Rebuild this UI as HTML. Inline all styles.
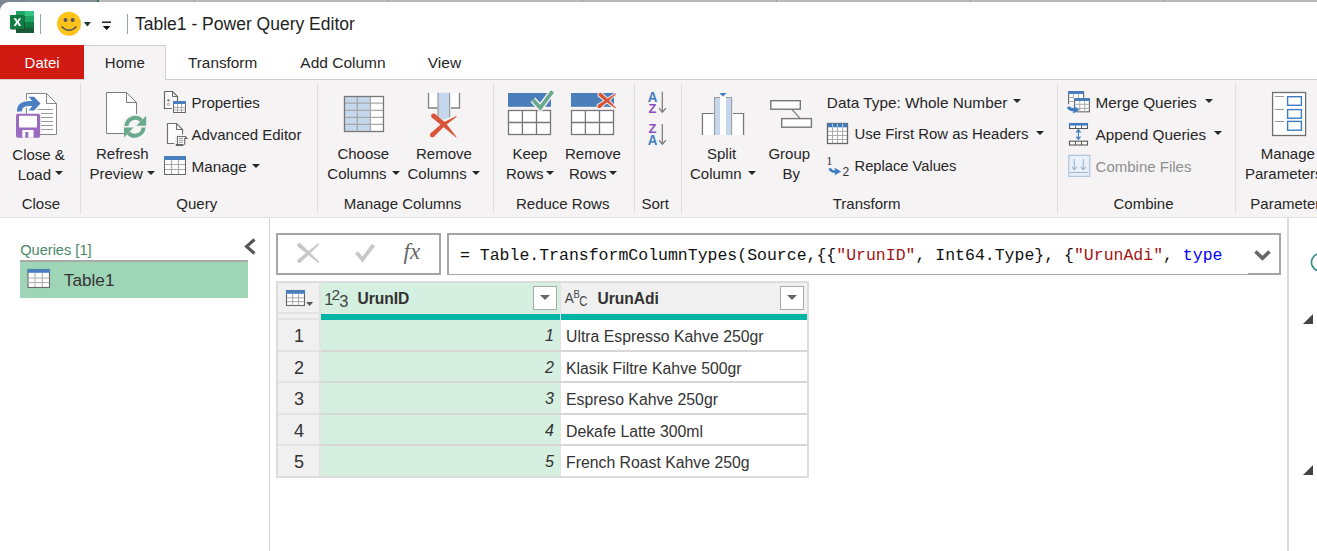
<!DOCTYPE html>
<html><head><meta charset="utf-8">
<style>
html,body{margin:0;padding:0;}
body{width:1317px;height:551px;overflow:hidden;position:relative;background:#fff;font-family:"Liberation Sans",sans-serif;color:#262626;}
.a{position:absolute;}
.t{position:absolute;white-space:nowrap;line-height:1;font-size:15px;}
.sep{position:absolute;width:1px;background:#e1dfdd;top:83px;height:131px;}
.dd{position:absolute;width:0;height:0;border-left:4px solid transparent;border-right:4px solid transparent;border-top:4px solid #262626;}
svg{position:absolute;overflow:visible;}
</style></head><body>

<!-- top strip background -->
<div class="a" style="left:0;top:0;width:1317px;height:12px;background:#bababa;"></div>
<div class="a" style="left:0;top:0;width:97px;height:12px;background:#878d97;"></div>
<div class="a" style="left:97px;top:0;width:2px;height:12px;background:#2f7d4f;"></div>
<div class="a" style="left:194px;top:0;width:1px;height:12px;background:#9a9a9a;"></div>
<div class="a" style="left:388px;top:0;width:1px;height:12px;background:#9a9a9a;"></div>
<div class="a" style="left:582px;top:0;width:1px;height:12px;background:#9a9a9a;"></div>
<div class="a" style="left:776px;top:0;width:1px;height:12px;background:#9a9a9a;"></div>
<div class="a" style="left:970px;top:0;width:1px;height:12px;background:#9a9a9a;"></div>
<div class="a" style="left:1164px;top:0;width:1px;height:12px;background:#9a9a9a;"></div>
<div class="a" style="left:0;top:0;width:27px;height:12px;background:#7f8794;"></div>
<!-- window -->
<div class="a" style="left:0;top:2px;width:1317px;height:549px;background:#fff;border-top-left-radius:9px;"></div>

<!-- title bar -->
<svg style="left:0;top:0" width="130" height="44">
  <rect x="16" y="11" width="18" height="22" fill="#185c37"/>
  <rect x="16" y="11" width="18" height="5.5" fill="#21a366"/>
  <rect x="25" y="11" width="9" height="5.5" fill="#33c481"/>
  <rect x="16" y="16.5" width="18" height="5.5" fill="#21a366"/>
  <rect x="16" y="22" width="18" height="5.5" fill="#107c41"/>
  <rect x="11" y="16" width="14" height="14" fill="#0b3d22" opacity="0.5"/>
  <rect x="10" y="15" width="14" height="14" fill="#107c41"/>
  <path d="M13.6 18.2h2.4l1.4 2.6 1.5-2.6h2.3l-2.5 3.8 2.6 4h-2.4l-1.5-2.7-1.5 2.7h-2.4l2.6-4z" fill="#fff"/>
  <rect x="40" y="14" width="1" height="20" fill="#8fa89a"/>
  <circle cx="69" cy="23.8" r="12" fill="#fdc31a"/>
  <circle cx="65.5" cy="20" r="2" fill="#555"/>
  <circle cx="72.6" cy="20" r="2" fill="#555"/>
  <path d="M61.5 26.5 Q69 34 76.5 26.5" stroke="#555" stroke-width="1.4" fill="none"/>
  <path d="M83.8 22h7.2l-3.6 4.4z" fill="#1f3d33"/>
  <rect x="102" y="21.5" width="9" height="1.4" fill="#111"/>
  <path d="M102.8 26h7.6l-3.8 4z" fill="#111"/>
  <rect x="127" y="14" width="1" height="20" fill="#8fa89a"/>
</svg>
<div class="t" style="left:135px;top:16px;font-size:17.5px;color:#1f1f1f;">Table1 - Power Query Editor</div>

<!-- tabs -->
<div class="a" style="left:0;top:79px;width:1317px;height:1px;background:#d2d0ce;"></div>
<div class="a" style="left:0;top:45px;width:84px;height:34px;background:#d11a12;"></div>
<div class="a" style="left:84px;top:45px;width:82px;height:35px;background:#f5f3f4;border-top:1px solid #d2d0ce;border-right:1px solid #d2d0ce;box-sizing:border-box;"></div>
<div class="t" style="left:24.6px;top:55px;color:#fff;">Datei</div>
<div class="t" style="left:104.8px;top:55px;">Home</div>
<div class="t" style="left:188px;top:55px;font-size:15.3px;">Transform</div>
<div class="t" style="left:300.3px;top:55px;font-size:15.5px;">Add Column</div>
<div class="t" style="left:427.8px;top:55px;font-size:15.5px;">View</div>

<!-- ribbon -->
<div class="a" style="left:0;top:80px;width:1317px;height:137px;background:#f5f3f4;"></div>
<div class="a" style="left:0;top:217px;width:1317px;height:1px;background:#e1dfdd;"></div>
<div class="sep" style="left:80px"></div>
<div class="sep" style="left:317px"></div>
<div class="sep" style="left:493px"></div>
<div class="sep" style="left:634px"></div>
<div class="sep" style="left:681px"></div>
<div class="sep" style="left:1057px"></div>
<div class="sep" style="left:1235px"></div>

<!-- group labels -->
<div class="t" style="left:21.7px;top:196px;">Close</div>
<div class="t" style="left:176.3px;top:196px;">Query</div>
<div class="t" style="left:343.8px;top:196px;">Manage Columns</div>
<div class="t" style="left:516px;top:196px;">Reduce Rows</div>
<div class="t" style="left:641.4px;top:196px;">Sort</div>
<div class="t" style="left:832.7px;top:196px;">Transform</div>
<div class="t" style="left:1113.5px;top:196px;">Combine</div>
<div class="t" style="left:1250.3px;top:196px;">Parameters</div>

<!-- big button labels -->
<div class="t" style="left:12.3px;top:147px;">Close &amp;</div>
<div class="t" style="left:17.7px;top:167px;">Load</div><div class="dd" style="left:55px;top:171px"></div>
<div class="t" style="left:96px;top:146px;">Refresh</div>
<div class="t" style="left:89.4px;top:166px;">Preview</div><div class="dd" style="left:147px;top:171px"></div>
<div class="t" style="left:191.4px;top:95px;">Properties</div>
<div class="t" style="left:191.4px;top:127px;">Advanced Editor</div>
<div class="t" style="left:191.4px;top:159px;font-size:15.3px;">Manage</div><div class="dd" style="left:252px;top:164px"></div>
<div class="t" style="left:337.4px;top:146px;">Choose</div>
<div class="t" style="left:327.3px;top:166px;">Columns</div><div class="dd" style="left:392px;top:171px"></div>
<div class="t" style="left:416px;top:146px;">Remove</div>
<div class="t" style="left:407.5px;top:166px;">Columns</div><div class="dd" style="left:472px;top:171px"></div>
<div class="t" style="left:512.4px;top:146px;">Keep</div>
<div class="t" style="left:506px;top:166px;">Rows</div><div class="dd" style="left:546px;top:171px"></div>
<div class="t" style="left:565px;top:146px;">Remove</div>
<div class="t" style="left:569px;top:166px;">Rows</div><div class="dd" style="left:609px;top:171px"></div>
<div class="t" style="left:707px;top:146px;">Split</div>
<div class="t" style="left:690px;top:166px;">Column</div><div class="dd" style="left:748px;top:171px"></div>
<div class="t" style="left:768.4px;top:146px;">Group</div>
<div class="t" style="left:782.6px;top:166px;">By</div>
<div class="t" style="left:826.8px;top:95px;font-size:15.35px;">Data Type: Whole Number</div><div class="dd" style="left:1012.6px;top:99px"></div>
<div class="t" style="left:854.6px;top:127px;font-size:14.9px;">Use First Row as Headers</div><div class="dd" style="left:1035.5px;top:131px"></div>
<div class="t" style="left:854.6px;top:159px;font-size:14.7px;">Replace Values</div>
<div class="t" style="left:1095.6px;top:95px;font-size:15.3px;">Merge Queries</div><div class="dd" style="left:1204.8px;top:99px"></div>
<div class="t" style="left:1095.6px;top:127px;font-size:15.3px;">Append Queries</div><div class="dd" style="left:1213.5px;top:131px"></div>
<div class="t" style="left:1095.6px;top:159px;color:#8e8e8e;">Combine Files</div>
<div class="t" style="left:1260.7px;top:146px;">Manage</div>
<div class="t" style="left:1245px;top:166px;">Parameters</div>

<!-- ICONS -->
<svg style="left:0;top:0" width="1317" height="220">
 <!-- Close & Load -->
 <path d="M26.5 93.5H46.5L56.5 103.5V134.5H26.5Z" fill="#fff" stroke="#868686"/>
 <path d="M46.5 93.5V103.5H56.5" fill="none" stroke="#868686"/>
 <path d="M37.5 109.5H53M41 113.5H53M41 117.5H53M41 121.5H53M41 125.5H53M41 129.5H53" stroke="#9a9a9a" stroke-width="1"/>
 <path d="M19.5 111.5 Q19 103.5 30 103.5 H35" stroke="#f5f3f4" stroke-width="8" fill="none"/>
 <path d="M19.5 111.5 Q19 103.5 30 103.5 H35" stroke="#4a7fc1" stroke-width="5" fill="none"/>
 <path d="M28.5 96.8H34L40.5 103.5L34 110.5H28.5L34.5 103.5Z" fill="#4a7fc1"/>
 <rect x="16" y="113.7" width="24.2" height="24" rx="2" fill="#9b6bbf"/>
 <rect x="19" y="115.8" width="18" height="11.8" rx="1" fill="#fff"/>
 <rect x="22.3" y="130" width="11.3" height="7.7" fill="#fff"/>
 <rect x="25.3" y="132" width="3" height="5.7" fill="#9b6bbf"/>
 <!-- Refresh -->
 <path d="M106.5 92.5H126.5L136.5 102.5V133.5H106.5Z" fill="#fff" stroke="#7c7c7c"/>
 <path d="M126.5 92.5V102.5H136.5" fill="none" stroke="#7c7c7c"/>
 <circle cx="135" cy="126.7" r="13" fill="#f5f3f4"/>
 <path d="M126.5 126 A8.7 8.7 0 0 1 141.5 120.5" stroke="#6aa98e" stroke-width="4" fill="none"/>
 <path d="M136.3 125.7H146.2V115.8Z" fill="#6aa98e"/>
 <path d="M143.5 127.5 A8.7 8.7 0 0 1 128.5 133" stroke="#6aa98e" stroke-width="4" fill="none"/>
 <path d="M124 127.6H133.5L124 137.5Z" fill="#6aa98e"/>
 <!-- Properties -->
 <path d="M164.5 91.5H172.5L177.5 96.5V101M172 108.5H164.5V91.5" fill="#fff" stroke="#666" stroke-width="1.2"/>
 <path d="M172.5 91.5V96.5H177.5" fill="none" stroke="#666" stroke-width="1"/>
 <circle cx="168.4" cy="100.3" r="1.2" fill="#888"/>
 <circle cx="168.4" cy="104.4" r="1.1" fill="none" stroke="#888" stroke-width="0.8"/>
 <rect x="173.5" y="101.5" width="12" height="11" fill="#fff" stroke="#666"/>
 <rect x="173" y="101" width="13" height="3" fill="#4a7fbd"/>
 <path d="M177.5 104V112M181.5 104V112M173.5 107.5H185.5M173.5 110H185.5" stroke="#aaa" stroke-width="1"/>
 <!-- Advanced Editor -->
 <path d="M167.5 123.5H176.5L182.5 129.5V143.5H167.5Z" fill="#fff" stroke="#707070" stroke-width="1.2"/>
 <path d="M176.5 123.5V129.5H182.5" fill="none" stroke="#707070" stroke-width="1.1"/>
 <path d="M175 134.5H188.5V146.5H174Z" fill="#f5f3f4"/>
 <path d="M177.5 144.5V136.5H185.5L187 138.3H184.7V144.8" fill="#fff" stroke="#707070" stroke-width="1.2"/>
 <path d="M179 138.3H183.2M179 140.3H183.2M179 142.3H183.2" stroke="#8a8a8a" stroke-width="0.9"/>
 <path d="M175.8 145H183.5" stroke="#555" stroke-width="1.8"/>
 <!-- Manage -->
 <rect x="164.5" y="156.5" width="21" height="18" fill="#fff" stroke="#666"/>
 <rect x="164" y="156" width="22" height="4" fill="#4a7fbd"/>
 <path d="M171.5 160V174M178.5 160V174M165 164.5H185M165 169.5H185" stroke="#aaa" stroke-width="1.2"/>
 <!-- Choose Columns -->
 <rect x="344" y="96" width="40" height="36" fill="#fff"/>
 <rect x="344" y="96" width="26.4" height="36" fill="#c5d7ec"/>
 <path d="M357.3 96V132M370.4 96V132M344 103.1H384M344 110.4H384M344 117.4H384M344 124.3H384" stroke="#a8a8a8" stroke-width="1.3"/>
 <rect x="344.5" y="96.5" width="39" height="35" fill="none" stroke="#777" stroke-width="1.3"/>
 <!-- Remove Columns -->
 <rect x="428.5" y="92.7" width="31" height="15.6" fill="#fff"/>
 <path d="M428.5 92.7V108H437.3M451 108H459.5V92.7" fill="none" stroke="#808080" stroke-width="1.3"/>
 <path d="M438 92.7V117.2L443.8 119.8L449.6 117.2V92.7Z" fill="#c5d7ec"/>
 <path d="M438 92.7V117.2M449.6 92.7V117.2" stroke="#9a9a9a" stroke-width="1.2"/>
 <path d="M431.97 117.65 L442.23 125.98 L456.01 137.48 L456.59 136.92 L445.37 122.62 L435.03 113.95Z" fill="#d9553a" stroke="#f5f3f4" stroke-width="0"/>
 <circle cx="433.5" cy="115.8" r="2.4" fill="#d9553a"/>
 <path d="M433.93 136.76 L444.96 125.81 L456.71 116.74 L456.29 116.06 L442.64 122.79 L430.67 133.24Z" fill="#d9553a"/>
 <circle cx="432.3" cy="135" r="2.4" fill="#d9553a"/>
 <!-- Keep Rows -->
 <rect x="508" y="93" width="43" height="13.8" fill="#4a7ebb"/>
 <rect x="508.5" y="110.5" width="42" height="24" fill="#fff" stroke="#777" stroke-width="1.3"/>
 <path d="M522.4 110.5V134.5M536.5 110.5V134.5M508.5 122.5H550.5" stroke="#777" stroke-width="1.3"/>
 <path d="M532.9 99.7L540.3 107.8L552.5 91.4" stroke="#f5f3f4" stroke-width="6.5" fill="none" stroke-linejoin="miter"/>
 <path d="M532.9 99.7L540.3 107.8L552.5 91.4" stroke="#6aa98e" stroke-width="3.8" fill="none" stroke-linejoin="miter"/>
 <!-- Remove Rows -->
 <rect x="571" y="93" width="43" height="13.8" fill="#4a7ebb"/>
 <rect x="571.5" y="110.5" width="42" height="24" fill="#fff" stroke="#777" stroke-width="1.3"/>
 <path d="M585.4 110.5V134.5M599.5 110.5V134.5M571.5 122.5H613.5" stroke="#777" stroke-width="1.3"/>
 <g stroke="#f5f3f4" stroke-width="1.8" fill="#f5f3f4">
 <path d="M599.04 96.03 L605.88 101.78 L615.57 108.46 L616.03 107.94 L608.12 99.22 L601.56 93.17Z"/><circle cx="600.3" cy="94.6" r="1.9"/>
 <path d="M600.44 107.82 L607.85 101.61 L616.21 93.88 L615.79 93.32 L606.15 99.39 L598.16 104.78Z"/><circle cx="599.3" cy="106.3" r="1.9"/>
 </g>
 <g fill="#d9553a">
 <path d="M599.04 96.03 L605.88 101.78 L615.57 108.46 L616.03 107.94 L608.12 99.22 L601.56 93.17Z"/><circle cx="600.3" cy="94.6" r="1.9"/>
 <path d="M600.44 107.82 L607.85 101.61 L616.21 93.88 L615.79 93.32 L606.15 99.39 L598.16 104.78Z"/><circle cx="599.3" cy="106.3" r="1.9"/>
 </g>
 <!-- Sort -->
 <g font-family="Liberation Sans" font-weight="bold" font-size="13.5">
  <text x="647.8" y="101.6" fill="#3f7cc0" font-size="14.8" textLength="9.6" lengthAdjust="spacingAndGlyphs">A</text>
  <text x="648.6" y="112.6" fill="#8a4dbf" textLength="7.9" lengthAdjust="spacingAndGlyphs">Z</text>
  <text x="648.6" y="132.6" fill="#8a4dbf" textLength="7.9" lengthAdjust="spacingAndGlyphs">Z</text>
  <text x="647.8" y="144.6" fill="#3f7cc0" font-size="14.8" textLength="9.6" lengthAdjust="spacingAndGlyphs">A</text>
 </g>
 <path d="M662.3 91.8V112M659 108.1L662.3 112.2L665.9 108.1M662.3 123.9V144.2M659 140.2L662.3 144.4L665.9 140.2" stroke="#777" stroke-width="1.2" fill="none"/>
 <!-- Split Column -->
 <path d="M702.5 135V113.5H713.5M733 113.5H743.5V135" fill="none" stroke="#777" stroke-width="1.2"/>
 <rect x="702.5" y="113.5" width="41" height="21.5" fill="#fff"/>
 <path d="M702.5 135V113.5H713.5M733 113.5H743.5V135" fill="none" stroke="#777" stroke-width="1.2"/>
 <rect x="714" y="97" width="6" height="38" fill="#c5d7ec"/>
 <rect x="726" y="97" width="6" height="38" fill="#c5d7ec"/>
 <rect x="720" y="96.5" width="6" height="38.5" fill="#fff"/>
 <path d="M714.5 135V97.5H720M726 97.5H731.6V135" fill="none" stroke="#9e9e9e" stroke-width="1.1"/>
 <path d="M719.3 93.1H726.6L723 96.5Z" fill="#3f7cc0"/>
 <!-- Group By -->
 <rect x="770.8" y="100.7" width="29.5" height="8.5" fill="#fff" stroke="#777" stroke-width="1.4"/>
 <rect x="781.7" y="118.6" width="29.7" height="8.6" fill="#fff" stroke="#777" stroke-width="1.4"/>
 <path d="M792.1 109.7L799.9 118.1" stroke="#777" stroke-width="1.2"/>
 <!-- Use First Row -->
 <rect x="827.5" y="123.5" width="20" height="20" fill="#fff" stroke="#666" stroke-width="1.3"/>
 <rect x="828" y="123.5" width="19.5" height="3.8" fill="#3f7cc0"/>
 <path d="M832.5 124V143M837.5 124V143M842.6 124V143M828 131.3H847M828 135.5H847M828 139.5H847" stroke="#aaa" stroke-width="1"/>
 <path d="M832.5 123.5V127.3M837.5 123.5V127.3M842.6 123.5V127.3" stroke="#bcd" stroke-width="0.8"/>
 <!-- Replace Values -->
 <text x="826.2" y="164.8" font-family="Liberation Serif" font-size="12.5" fill="#333">1</text>
 <text x="842.6" y="176" font-family="Liberation Sans" font-size="12" fill="#333">2</text>
 <path d="M829.8 168.3Q830.5 171.8 836 171.7" stroke="#3f7cc0" stroke-width="2.6" fill="none"/>
 <path d="M834.2 167.6L841.2 171.6L834.5 175.6L835.6 171.6Z" fill="#3f7cc0"/>
 <!-- Merge Queries -->
 <rect x="1068.5" y="91.5" width="15" height="13" fill="#fff"/>
 <path d="M1068.6 104.3V91.5H1083.6V98" fill="none" stroke="#666" stroke-width="1.1"/>
 <rect x="1068.1" y="91" width="15.8" height="3" fill="#4a7fbd"/>
 <path d="M1073.3 94V98M1078.4 94V98M1069 97.5H1074M1069 101.3H1074" stroke="#aaa" stroke-width="1"/>
 <rect x="1074.6" y="98.6" width="14.8" height="13.2" fill="#fff" stroke="#666" stroke-width="1.1"/>
 <rect x="1074.1" y="98.1" width="15.8" height="2.9" fill="#4a7fbd"/>
 <path d="M1079.8 101V112M1084.7 101V112M1075 104.3H1089.5M1075 108.4H1089.5" stroke="#aaa" stroke-width="1"/>
 <path d="M1068.3 106.8Q1069.5 109.8 1075 109.8" stroke="#f5f3f4" stroke-width="5" fill="none"/>
 <path d="M1068.3 106.8Q1069.5 109.8 1075 109.8" stroke="#3f7cc0" stroke-width="3.2" fill="none"/>
 <path d="M1073.8 105.8L1079.3 109.8L1072.3 113.8L1074.3 109.8Z" fill="#3f7cc0"/>
 <!-- Append Queries -->
 <rect x="1069.5" y="123.5" width="18" height="5" fill="#fff" stroke="#555" stroke-width="1.1"/>
 <rect x="1069" y="123" width="19" height="2.6" fill="#3f7cc0"/>
 <path d="M1075.5 125.6V128.5M1081.5 125.6V128.5" stroke="#555" stroke-width="1"/>
 <rect x="1069.5" y="141.2" width="18" height="3.8" fill="#fff" stroke="#555" stroke-width="1.1"/>
 <path d="M1075.5 141.2V145M1081.5 141.2V145" stroke="#555" stroke-width="1"/>
 <path d="M1078.4 131V138" stroke="#3f7cc0" stroke-width="1.1"/>
 <path d="M1076.3 132.5L1078.4 129.8L1080.5 132.5M1076.3 136.6L1078.4 139.3L1080.5 136.6" stroke="#3f7cc0" stroke-width="1.3" fill="none"/>
 <!-- Combine Files -->
 <rect x="1068.8" y="155.3" width="21" height="21" fill="#e9f0f8" stroke="#a8bfdc" stroke-width="1.1"/>
 <path d="M1074.3 159V169.5M1071.8 166.8L1074.3 169.7L1076.8 166.8M1083.3 159V169.5M1080.8 166.8L1083.3 169.7L1085.8 166.8M1070 172.5H1088.5" stroke="#9db6d6" stroke-width="1.1" fill="none"/>
 <!-- Manage Parameters -->
 <rect x="1272.6" y="92.5" width="33" height="43" fill="#fff" stroke="#6e6e6e" stroke-width="1.3"/>
 <path d="M1275 96.5H1284M1275 109.5H1284M1275 121.5H1284" stroke="#999" stroke-width="1"/>
 <rect x="1287.6" y="96.7" width="13.8" height="8.6" fill="#fff" stroke="#3f7cc0" stroke-width="1.4"/>
 <rect x="1287.6" y="109.6" width="13.8" height="8.6" fill="#fff" stroke="#3f7cc0" stroke-width="1.4"/>
 <rect x="1287.6" y="121.4" width="13.8" height="8.8" fill="#fff" stroke="#3f7cc0" stroke-width="1.4"/>
</svg>


<!-- lower area -->
<div class="a" style="left:269px;top:218px;width:1px;height:333px;background:#d6d6d6;"></div>
<div class="a" style="left:1287px;top:218px;width:2px;height:333px;background:#dadada;"></div>
<div class="t" style="left:20.2px;top:243px;font-size:14.6px;color:#4a8765;">Queries [1]</div>
<svg style="left:0;top:0" width="270" height="300">
  <path d="M254.5 239.5 L246.5 246.5 L254.5 253.5" stroke="#555" stroke-width="3" fill="none"/>
</svg>
<div class="a" style="left:20px;top:260px;width:228px;height:2px;background:#a9a9a9;"></div>
<div class="a" style="left:20px;top:262px;width:228px;height:36px;background:#9fd5b7;"></div>
<div class="t" style="left:63.8px;top:272px;font-size:17.2px;color:#333;">Table1</div>
<svg style="left:0;top:0" width="270" height="300">
 <rect x="28" y="269.5" width="21.5" height="18" fill="#fff" stroke="#6a6a6a" stroke-width="1.1"/>
 <rect x="27.6" y="269" width="22.4" height="3.8" fill="#4a7fbd"/>
 <path d="M35 273V287M42.3 273V287M28.5 278H49M28.5 282.6H49" stroke="#aaa" stroke-width="1"/>
</svg>

<!-- formula bar -->
<div class="a" style="left:276px;top:233px;width:165px;height:42px;border:2px solid #a5a5a5;box-sizing:border-box;background:#fff;"></div>
<div class="a" style="left:447px;top:233px;width:834px;height:42px;border:2px solid #a5a5a5;border-bottom-width:1px;box-sizing:border-box;background:#fff;"></div>
<div class="a" style="left:1248px;top:273px;width:33px;height:2px;background:#a5a5a5;"></div>
<svg style="left:0;top:0" width="1317" height="300">
  <path d="M297.9 246.8 L318.3 262.9 L319.3 261.7 L300.7 243.6Z" fill="#c8c8c8"/>
  <path d="M300.7 262.6 L319.3 244.4 L318.3 243.2 L297.9 259.4Z" fill="#c8c8c8"/>
  <circle cx="299.3" cy="245.2" r="2.1" fill="#c8c8c8"/><circle cx="299.3" cy="261" r="2.1" fill="#c8c8c8"/>
  <path d="M356.5 252.5 L362.5 259.5 L373.5 245" stroke="#c8c8c8" stroke-width="3.8" fill="none" stroke-linejoin="miter"/>
  <path d="M1255.5 251.5 L1262.5 258.3 L1269.5 251.5" stroke="#666" stroke-width="3.6" fill="none"/>
</svg>
<div class="t" style="left:403.5px;top:239.5px;font-family:'Liberation Serif',serif;font-style:italic;font-size:23px;color:#666;">fx</div>
<div class="t" style="left:460px;top:248px;font-family:'Liberation Mono',monospace;font-size:16.5px;color:#111;">= Table.TransformColumnTypes(Source,{{<span style="color:#a31515">"UrunID"</span>, Int64.Type}, {<span style="color:#a31515">"UrunAdi"</span>, <span style="color:#0000ff">type</span></div>

<!-- table -->
<div class="a" style="left:276px;top:281px;width:533px;height:197px;background:#dcdcdc;"></div>
<div class="a" style="left:278px;top:283px;width:529px;height:193px;background:#e3e3e3;"></div>
<!-- header row -->
<div class="a" style="left:278px;top:283px;width:41px;height:29px;background:#f0f0f0;"></div>
<div class="a" style="left:321px;top:283px;width:238.5px;height:29.5px;background:#d5efe0;"></div>
<div class="a" style="left:561px;top:283px;width:246px;height:29.5px;background:#f0f0f0;"></div>
<div class="a" style="left:321px;top:312.5px;width:486px;height:1.5px;background:#ece8e8;"></div>
<div class="a" style="left:278px;top:313.5px;width:41px;height:4.5px;background:#f0f0f0;"></div>
<div class="a" style="left:321px;top:314px;width:238.5px;height:6px;background:#01b5a6;"></div>
<div class="a" style="left:561px;top:314px;width:246px;height:6px;background:#01b5a6;"></div>
<!-- rows -->
<div class="a" style="left:278px;top:320px;width:41px;height:30px;background:#f0f0f0;"></div>
<div class="a" style="left:278px;top:352px;width:41px;height:29px;background:#f0f0f0;"></div>
<div class="a" style="left:278px;top:383px;width:41px;height:30px;background:#f0f0f0;"></div>
<div class="a" style="left:278px;top:415px;width:41px;height:29px;background:#f0f0f0;"></div>
<div class="a" style="left:278px;top:446px;width:41px;height:30px;background:#f0f0f0;"></div>
<div class="a" style="left:321px;top:320px;width:238.5px;height:30px;background:#d5efe0;"></div>
<div class="a" style="left:321px;top:352px;width:238.5px;height:29px;background:#d5efe0;"></div>
<div class="a" style="left:321px;top:383px;width:238.5px;height:30px;background:#d5efe0;"></div>
<div class="a" style="left:321px;top:415px;width:238.5px;height:29px;background:#d5efe0;"></div>
<div class="a" style="left:321px;top:446px;width:238.5px;height:30px;background:#d5efe0;"></div>
<div class="a" style="left:561px;top:320px;width:246px;height:30px;background:#fff;"></div>
<div class="a" style="left:561px;top:352px;width:246px;height:29px;background:#fff;"></div>
<div class="a" style="left:561px;top:383px;width:246px;height:30px;background:#fff;"></div>
<div class="a" style="left:561px;top:415px;width:246px;height:29px;background:#fff;"></div>
<div class="a" style="left:561px;top:446px;width:246px;height:30px;background:#fff;"></div>
<div class="a" style="left:321px;top:350px;width:486px;height:2px;background:#d7d7d7;"></div>
<div class="a" style="left:321px;top:381px;width:486px;height:2px;background:#d7d7d7;"></div>
<div class="a" style="left:321px;top:413px;width:486px;height:2px;background:#d7d7d7;"></div>
<div class="a" style="left:321px;top:444px;width:486px;height:2px;background:#d7d7d7;"></div>

<svg style="left:0;top:0" width="700" height="330">
 <rect x="286.5" y="290.5" width="18" height="15" fill="#fff" stroke="#666" stroke-width="1.1"/>
 <rect x="286" y="290" width="19" height="3.8" fill="#4a7fbd"/>
 <path d="M292.6 293.8V305.5M298.6 293.8V305.5M287 297.8H304M287 301.6H304" stroke="#aaa" stroke-width="1"/>
 <path d="M306.1 302H313.1L309.6 305.9Z" fill="#555"/>
 <g font-family="Liberation Sans" fill="#444">
  <text x="324.3" y="305" font-size="16.5">1</text>
  <text x="331.5" y="299.9" font-size="15.5">2</text>
  <text x="339.2" y="307" font-size="16.5">3</text>
  <text x="564.8" y="303" font-size="14.5" textLength="9" lengthAdjust="spacingAndGlyphs">A</text>
  <text x="573.6" y="297.8" font-size="11" textLength="6.4" lengthAdjust="spacingAndGlyphs">B</text>
  <text x="579.2" y="306.1" font-size="14" textLength="8.2" lengthAdjust="spacingAndGlyphs">C</text>
 </g>
</svg>
<div class="t" style="left:357.4px;top:291px;font-weight:bold;font-size:15.6px;color:#333;">UrunID</div>
<div class="t" style="left:597.4px;top:291px;font-weight:bold;font-size:15.6px;color:#333;">UrunAdi</div>
<div class="a" style="left:533px;top:286px;width:24px;height:24px;background:#fff;border:1px solid #aaa;box-sizing:border-box;"></div>
<div class="a" style="left:780px;top:286px;width:24px;height:24px;background:#fff;border:1px solid #aaa;box-sizing:border-box;"></div>
<svg style="left:0;top:0" width="1317" height="551">
  <path d="M540 295h10l-5 5z" fill="#666"/>
  <path d="M787 295h10l-5 5z" fill="#666"/>
  <path d="M1303 324h10v-10z" fill="#444"/>
  <circle cx="1320" cy="262.3" r="8.6" fill="none" stroke="#2b8c84" stroke-width="1.6"/>
  <path d="M1303 475h10v-10z" fill="#444"/>
</svg>

<div class="t" style="left:294px;top:327px;font-size:18px;color:#333;">1</div>
<div class="t" style="left:294px;top:359px;font-size:18px;color:#333;">2</div>
<div class="t" style="left:294px;top:390px;font-size:18px;color:#333;">3</div>
<div class="t" style="left:294px;top:422px;font-size:18px;color:#333;">4</div>
<div class="t" style="left:294px;top:453px;font-size:18px;color:#333;">5</div>

<div class="t" style="right:763px;top:328px;font-size:16px;font-style:italic;color:#333;">1</div>
<div class="t" style="right:763px;top:360px;font-size:16px;font-style:italic;color:#333;">2</div>
<div class="t" style="right:763px;top:391px;font-size:16px;font-style:italic;color:#333;">3</div>
<div class="t" style="right:763px;top:423px;font-size:16px;font-style:italic;color:#333;">4</div>
<div class="t" style="right:763px;top:454px;font-size:16px;font-style:italic;color:#333;">5</div>

<div class="t" style="left:566px;top:329px;font-size:15.8px;color:#333;">Ultra Espresso Kahve 250gr</div>
<div class="t" style="left:566px;top:361px;font-size:15.8px;color:#333;">Klasik Filtre Kahve 500gr</div>
<div class="t" style="left:566px;top:392px;font-size:15.8px;color:#333;">Espreso Kahve 250gr</div>
<div class="t" style="left:566px;top:424px;font-size:15.8px;color:#333;">Dekafe Latte 300ml</div>
<div class="t" style="left:566px;top:455px;font-size:15.8px;color:#333;">French Roast Kahve 250g</div>

</body></html>
